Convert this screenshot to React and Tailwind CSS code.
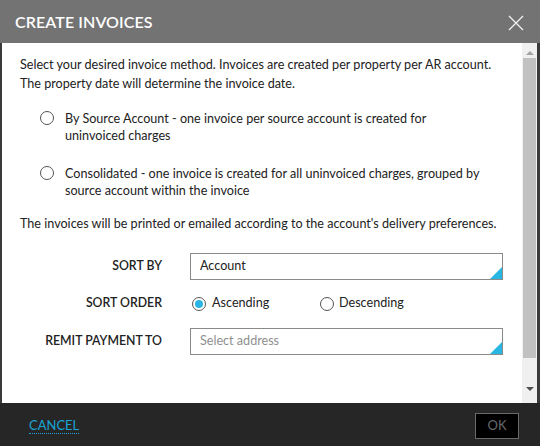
import React from "react";

function Radio({ checked }) {
  return (
    <span className="flex h-[14px] w-[14px] shrink-0 items-center justify-center rounded-full border-[1.5px] border-[#555]">
      {checked && <span className="h-[8px] w-[8px] rounded-full bg-[#29b6e3]" />}
    </span>
  );
}

function SelectBox({ text, placeholder }) {
  return (
    <div className="relative flex h-[27px] w-[313px] items-center border border-[#8a8a8a] bg-white px-[9px]">
      <span className={placeholder ? "text-[12.6px] text-[#8f8f8f]" : "text-[12.6px] text-[#222]"}>{text}</span>
      <span className="absolute bottom-0 right-0 h-0 w-0 border-b-[12px] border-l-[12px] border-b-[#29b6e3] border-l-transparent" />
    </div>
  );
}

export default function App() {
  return (
    <div
      className="flex h-[446px] w-[540px] flex-col bg-[#3a3a3a]"
      style={{ fontFamily: "Lato, 'Open Sans', sans-serif" }}
    >
      <div className="flex h-[43px] shrink-0 items-center justify-between bg-[#737373] pl-[15px] pr-[16px]">
        <span className="text-[16px] font-semibold tracking-[0.1px] text-white">CREATE INVOICES</span>
        <svg width="16" height="16" viewBox="0 0 16 16" className="mt-[2px]">
          <path d="M1 1 L15 15 M15 1 L1 15" stroke="#f2f2f2" strokeWidth="1.3" fill="none" />
        </svg>
      </div>

      <div className="ml-[2px] mr-[3px] flex h-[360px] shrink-0 bg-white">
        <div className="flex-1 pl-[18px] pr-[10px] pt-[13px] text-[12.6px] leading-[18.5px] text-[#222]">
          <p>
            Select your desired invoice method. Invoices are created per property per AR account.
            <br />
            The property date will determine the invoice date.
          </p>

          <div className="mt-[17px] flex gap-[11px] pl-[20px]">
            <div className="mt-[1px]">
              <Radio />
            </div>
            <p className="leading-[17px]">
              By Source Account - one invoice per source account is created for
              <br />
              uninvoiced charges
            </p>
          </div>

          <div className="mt-[21px] flex gap-[11px] pl-[20px]">
            <div className="mt-[1px]">
              <Radio />
            </div>
            <p className="leading-[17px]">
              Consolidated - one invoice is created for all uninvoiced charges, grouped by
              <br />
              source account within the invoice
            </p>
          </div>

          <p className="mt-[16px]">
            The invoices will be printed or emailed according to the account's delivery preferences.
          </p>

          <div className="mt-[19px] grid grid-cols-[142px_1fr] items-center gap-x-[28px] gap-y-[14px] text-[#222]">
            <span className="text-right text-[12.3px] font-semibold">SORT BY</span>
            <SelectBox text="Account" />

            <span className="text-right text-[12.3px] font-semibold">SORT ORDER</span>
            <div className="flex h-[20px] items-center pl-[2px]">
              <Radio checked />
              <span className="ml-[6px] w-[108px]">Ascending</span>
              <Radio />
              <span className="ml-[5px]">Descending</span>
            </div>

            <span className="text-right text-[12.3px] font-semibold">REMIT PAYMENT TO</span>
            <SelectBox text="Select address" placeholder />
          </div>
        </div>

        <div className="flex w-[15px] shrink-0 flex-col items-center bg-[#f0f0f0]">
          <div className="flex h-[15px] items-center justify-center pt-[4px]">
            <span className="h-0 w-0 border-x-[4px] border-b-[4px] border-x-transparent border-b-[#a3a3a3]" />
          </div>
          <div className="h-[300px] w-[13px] bg-[#c1c1c1]" />
          <div className="flex-1" />
          <div className="flex h-[16px] items-start justify-center">
            <span className="h-0 w-0 border-x-[4px] border-t-[4px] border-x-transparent border-t-[#505050]" />
          </div>
        </div>
      </div>

      <div className="flex flex-1 items-center justify-between bg-[#262626] pl-[29px] pr-[21px]">
        <span className="mt-[2px] border-b border-dotted border-[#1aa3d4] text-[13px] leading-[16px] text-[#1aa3d4]">
          CANCEL
        </span>
        <div className="mt-[2px] flex h-[26px] w-[44px] items-center justify-center border border-[#6a6a6a] bg-black text-[13px] text-[#6a6a6a]">
          OK
        </div>
      </div>
    </div>
  );
}
